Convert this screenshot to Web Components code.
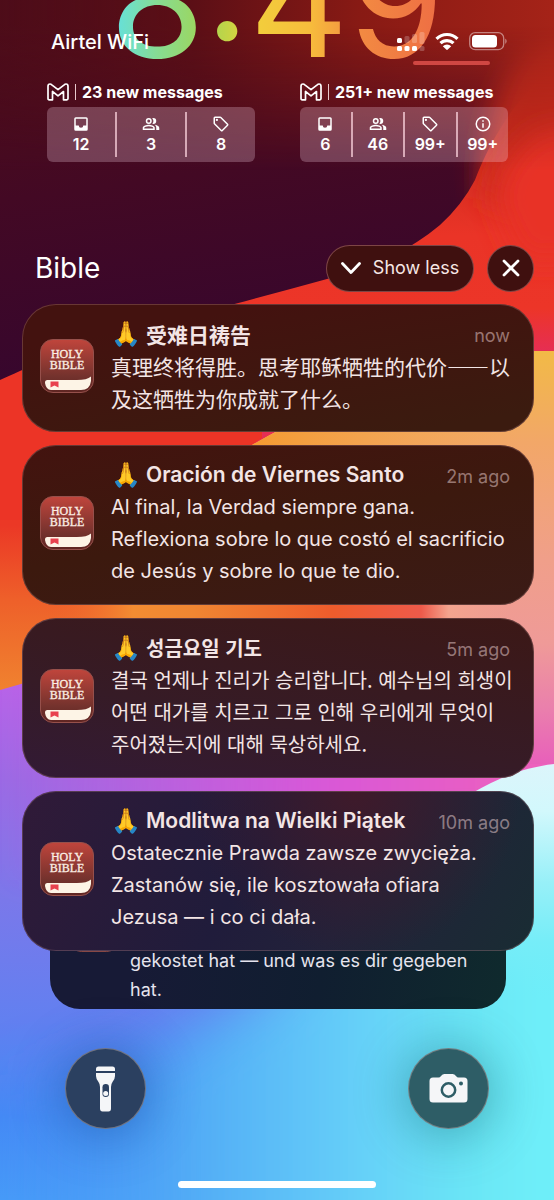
<!DOCTYPE html>
<html lang="en">
<head>
<meta charset="utf-8">
<meta name="viewport" content="width=device-width, initial-scale=1">
<title>Lock screen</title>
<style>
  html, body {
    margin: 0;
    min-height: 100vh;
  }

  body {
    font-family: Inter, "Noto Sans", "Noto Sans CJK SC", "Noto Color Emoji", sans-serif;
    color: #fff;
    background: #4a0c1a;
  }
</style>
</head>
<body>
<lock-screen>
  <status-bar slot="status" carrier="Airtel WiFi"></status-bar>
  <lock-clock slot="clock">8:49</lock-clock>

  <mail-widget slot="widgets" heading="23 new messages">
    <mail-stat icon="inbox">12</mail-stat>
    <mail-stat icon="people">3</mail-stat>
    <mail-stat icon="tag">8</mail-stat>
  </mail-widget>
  <mail-widget slot="widgets" heading="251+ new messages">
    <mail-stat icon="inbox">6</mail-stat>
    <mail-stat icon="people">46</mail-stat>
    <mail-stat icon="tag">99+</mail-stat>
    <mail-stat icon="info">99+</mail-stat>
  </mail-widget>

  <notification-group heading="Bible">
    <notification-card lang="zh-Hans" time="now" style="--fill: linear-gradient(170deg, #43120f 20%, #3b1b0f 90%)">
      <span slot="title">受难日祷告</span>
      真理终将得胜。思考耶稣牺牲的代价——以及这牺牲为你成就了什么。
    </notification-card>
    <notification-card lang="es" time="2m ago" style="--fill: linear-gradient(170deg, #43130f, #3c190e 50%, #3b1b16)">
      <span slot="title">Oración de Viernes Santo</span>
      Al final, la Verdad siempre gana. Reflexiona sobre lo que costó el sacrificio de Jesús y sobre lo que te dio.
    </notification-card>
    <notification-card lang="ko" time="5m ago" style="--fill: linear-gradient(190deg, #3c1816, #361b26 60%, #321a35)">
      <span slot="title">성금요일 기도</span>
      결국 언제나 진리가 승리합니다. 예수님의 희생이 어떤 대가를 치르고 그로 인해 우리에게 무엇이 주어졌는지에 대해 묵상하세요.
    </notification-card>
    <notification-card lang="pl" time="10m ago" style="--fill: radial-gradient(circle at 65% 0, #3f1a2a, transparent 45%), linear-gradient(120deg, #301a38, #201c3b 45%, #22223a 65%, #192c33)">
      <span slot="title">Modlitwa na Wielki Piątek</span>
      Ostatecznie Prawda zawsze zwycięża. Zastanów się, ile kosztowała ofiara Jezusa — i co ci dała.
    </notification-card>
    <stacked-card slot="stack" lang="de">gekostet hat — und was es dir gegeben hat.</stacked-card>
  </notification-group>

  <round-control slot="controls" icon="torch" label="Flashlight"></round-control>
  <round-control slot="controls" icon="camera" label="Camera"></round-control>
</lock-screen>

<script>
const wallpaper = `
  <svg viewBox="0 0 554 1200" preserveAspectRatio="none" aria-hidden="true">
    <defs>
      <linearGradient id="base" x1="0" y1="0" x2="0" y2="1">
        <stop offset=".57" stop-color="#b763e8"/>
        <stop offset=".65" stop-color="#9a6ae4"/>
        <stop offset=".75" stop-color="#7a78ea"/>
        <stop offset=".85" stop-color="#6280f0"/>
        <stop offset=".93" stop-color="#4488f5"/>
        <stop offset="1" stop-color="#469af8"/>
      </linearGradient>
      <linearGradient id="pink" x1="0" y1="0" x2="1" y2="0">
        <stop offset="0" stop-color="#d858d8" stop-opacity="0"/>
        <stop offset=".5" stop-color="#d858d8"/>
        <stop offset=".85" stop-color="#ee60bc"/>
        <stop offset="1" stop-color="#ea64c4"/>
      </linearGradient>
      <linearGradient id="sea" x1="0" y1="0" x2="554" y2="0" gradientUnits="userSpaceOnUse">
        <stop offset="0" stop-color="#4894f6" stop-opacity="0"/>
        <stop offset=".35" stop-color="#52acf6"/>
        <stop offset=".65" stop-color="#66d0f9"/>
        <stop offset=".85" stop-color="#6ae6f5"/>
        <stop offset="1" stop-color="#70f0fa"/>
      </linearGradient>
      <linearGradient id="ice" x1="0" y1="764" x2="0" y2="1000" gradientUnits="userSpaceOnUse">
        <stop offset="0" stop-color="#dcf5fb"/>
        <stop offset=".2" stop-color="#d2f8fc"/>
        <stop offset=".5" stop-color="#98f0f8"/>
        <stop offset=".75" stop-color="#76edf8"/>
        <stop offset="1" stop-color="#70ecf8" stop-opacity="0"/>
      </linearGradient>
      <linearGradient id="ember" x1="0" y1="390" x2="0" y2="690" gradientUnits="userSpaceOnUse">
        <stop offset="0" stop-color="#ec3426"/>
        <stop offset=".45" stop-color="#eb3826"/>
        <stop offset=".7" stop-color="#ee602a"/>
        <stop offset="1" stop-color="#f0822f"/>
      </linearGradient>
      <linearGradient id="glow" x1="0" y1="0" x2="1" y2="0">
        <stop offset=".08" stop-color="#ee5e2c" stop-opacity="0"/>
        <stop offset=".24" stop-color="#f38c32"/>
        <stop offset=".35" stop-color="#f08632"/>
        <stop offset=".6" stop-color="#ee5c2c"/>
        <stop offset=".76" stop-color="#ee5a4a"/>
        <stop offset=".81" stop-color="#f3a48e"/>
        <stop offset=".92" stop-color="#f1a08e" stop-opacity="0"/>
      </linearGradient>
      <linearGradient id="sand" x1="0" y1="350" x2="0" y2="770" gradientUnits="userSpaceOnUse">
        <stop offset="0" stop-color="#f2ba46"/>
        <stop offset=".22" stop-color="#f2a768"/>
        <stop offset=".5" stop-color="#f09f8a"/>
        <stop offset=".7" stop-color="#ef9a98"/>
        <stop offset=".85" stop-color="#ea80ac"/>
        <stop offset="1" stop-color="#e85cbc"/>
      </linearGradient>
      <linearGradient id="amber" x1="250" y1="0" x2="520" y2="0" gradientUnits="userSpaceOnUse">
        <stop offset="0" stop-color="#f59a30"/>
        <stop offset="1" stop-color="#f2a850" stop-opacity="0"/>
      </linearGradient>
      <linearGradient id="flame" x1="0" y1="60" x2="0" y2="352" gradientUnits="userSpaceOnUse">
        <stop offset="0" stop-color="#b0261a"/>
        <stop offset=".3" stop-color="#d02c1e"/>
        <stop offset=".6" stop-color="#ea3427"/>
        <stop offset=".85" stop-color="#ec3528"/>
        <stop offset="1" stop-color="#e62e54"/>
      </linearGradient>
      <linearGradient id="night" x1=".3" y1="0" x2=".5" y2="1">
        <stop offset="0" stop-color="#500d18"/>
        <stop offset=".45" stop-color="#430924"/>
        <stop offset="1" stop-color="#35062f"/>
      </linearGradient>
      <linearGradient id="dusk" x1="0" y1="0" x2="1" y2="0">
        <stop offset="0" stop-color="#4c0c1a" stop-opacity=".6"/>
        <stop offset=".35" stop-color="#5c0f16"/>
        <stop offset=".65" stop-color="#881a14"/>
        <stop offset="1" stop-color="#a52318"/>
      </linearGradient>
      <linearGradient id="fade" x1="0" y1="0" x2="0" y2="1">
        <stop offset=".15" stop-color="#fff"/>
        <stop offset="1" stop-color="#000"/>
      </linearGradient>
      <mask id="top"><rect width="554" height="170" fill="url(#fade)"/></mask>
      <filter id="soft" x="-50%" y="-50%" width="200%" height="200%"><feGaussianBlur stdDeviation="14"/></filter>
      <filter id="softer" x="-50%" y="-50%" width="200%" height="200%"><feGaussianBlur stdDeviation="30"/></filter>
    </defs>
    <rect width="554" height="1200" fill="url(#base)"/>
    <rect y="640" width="640" height="240" fill="url(#pink)" filter="url(#soft)"/>
    <path d="M-60 1090L140 1060L260 990L400 860H700V1400H-60Z" fill="url(#sea)" filter="url(#softer)"/>
    <path d="M0 300H554V670H70L0 690Z" fill="url(#ember)"/>
    <path d="M554 351C430 348 330 400 250 446H430V764H554Z" fill="url(#sand)"/>
    <path d="M0 180H554V351C430 348 330 400 250 446H0Z" fill="url(#flame)"/>
    <path d="M0 340H262V438L250 446V520H0Z" fill="#ec3426"/>
    <path d="M520 370C430 370 330 400 250 446H520Z" fill="url(#amber)"/>
    <rect y="590" width="554" height="50" fill="url(#glow)"/>
    <path d="M554 764C520 768 495 780 474 792C430 830 400 880 390 1000H554Z" fill="url(#ice)"/>
    <rect width="554" height="260" fill="url(#flame)"/>
    <path d="M0 380C40 362 60 354 90 345C150 326 240 303 327 279C380 264 410 250 440 225Q462 205 475 180C490 140 520 90 554 70V0H0Z" fill="url(#night)"/>
    <path d="M640 20L540 30Q480 80 482 196L520 210H640Z" fill="#c92a1d" filter="url(#soft)"/>
    <path d="M640 120L540 130Q500 160 494 200L520 260H640Z" fill="#e83226" filter="url(#soft)"/>
    <rect width="554" height="170" fill="url(#dusk)" mask="url(#top)"/>
  </svg>`;

const icons = {
  inbox: `<path d="M19 3H5a2 2 0 0 0-2 2v14a2 2 0 0 0 2 2h14a2 2 0 0 0 2-2V5a2 2 0 0 0-2-2zm0 11h-4a3 3 0 0 1-6 0H5V5h14z"/>`,
  people: `<path d="M16.7 13.1C18.1 14 19 15.300 19 17v3h4v-3c0-2.200-3.600-3.500-6.300-3.900zM15 12a4 4 0 0 0 0-8c-.5 0-.9.1-1.300.2a6 6 0 0 1 0 7.600c.4.1.8.2 1.300.2zM9 12a4 4 0 1 0 0-8 4 4 0 0 0 0 8zm0-6a2 2 0 1 1 0 4 2 2 0 0 1 0-4zm0 7c-2.700 0-8 1.300-8 4v3h16v-3c0-2.700-5.300-4-8-4zm6 5H3v-1c0-.7 3.200-2 6-2s6 1.300 6 2z"/>`,
  tag: `<path d="M21.400 11.600l-9-9A2 2 0 0 0 11 2H4a2 2 0 0 0-2 2v7c0 .6.200 1.100.6 1.400l9 9a2 2 0 0 0 2.800 0l7-7a2 2 0 0 0 0-2.800zM13 20l-9-9V4h7l9 9z"/><circle cx="6.500" cy="6.500" r="1.500"/>`,
  info: `<path d="M11 7h2v2h-2zm0 4h2v6h-2zm1-9a10 10 0 1 0 0 20 10 10 0 0 0 0-20zm0 18a8 8 0 1 1 0-16 8 8 0 0 1 0 16z"/>`,
};

class LockScreen extends HTMLElement {
  constructor() {
    super();
    this.attachShadow({ mode: 'open' }).innerHTML = `
      <style>
        :host {
          display: flex;
          flex-direction: column;
          position: relative;
          min-height: 100vh;
          overflow: hidden;
          isolation: isolate;
        }
        .wallpaper {
          position: absolute;
          inset: 0;
          z-index: -1;
        }
        svg {
          display: block;
          width: 100%;
          height: 100%;
        }
        .status {
          position: absolute;
          inset: 0 0 auto;
          z-index: 1;
        }
        .widgets {
          display: grid;
          grid-template-columns: 1fr 1fr;
          gap: 45px;
          padding: 6px 46px 83px 47px;
        }
        .controls {
          display: flex;
          justify-content: space-between;
          padding: 39px 65px 52px;
        }
        .home {
          width: 198px;
          height: 7px;
          margin: auto auto 12px;
          border-radius: 4px;
          background: #fff;
        }
      </style>
      <div class="wallpaper">${wallpaper}</div>
      <div class="status"><slot name="status"></slot></div>
      <slot name="clock"></slot>
      <div class="widgets"><slot name="widgets"></slot></div>
      <slot></slot>
      <div class="controls"><slot name="controls"></slot></div>
      <div class="home"></div>
    `;
  }
}

class StatusBar extends HTMLElement {
  constructor() {
    super();
    this.attachShadow({ mode: 'open' }).innerHTML = `
      <style>
        :host {
          display: flex;
          justify-content: space-between;
          padding: 30px 46px 0 51px;
          font-size: 20px;
          font-weight: 500;
          line-height: 24px;
        }
        .side {
          display: grid;
          justify-items: start;
        }
        svg {
          display: block;
        }
        .privacy {
          width: 77px;
          height: 4px;
          margin: 7px 0 0 16px;
          border-radius: 2px;
          background: #d04743;
        }
      </style>
      <span>${this.getAttribute('carrier')}</span>
      <div class="side">
        <svg width="111" height="24" viewBox="397 30 111 24" fill="#fff" role="img" aria-label="Signal, Wi-Fi, battery">
          <rect x="397" y="38" width="5" height="5" rx="1.500"/>
          <rect x="397" y="46" width="5" height="5" rx="1.500"/>
          <rect x="404.500" y="46" width="5" height="5" rx="1.500"/>
          <rect x="412" y="46" width="5" height="5" rx="1.500"/>
          <g opacity=".22">
            <rect x="404.500" y="36" width="5" height="7" rx="1.500"/>
            <rect x="412" y="34" width="5" height="9" rx="1.500"/>
            <rect x="419.500" y="32" width="5" height="12" rx="1.500"/>
            <rect x="419.500" y="46" width="5" height="5" rx="1.500"/>
          </g>
          <g fill="none" stroke="#fff" stroke-width="3.200">
            <path d="M436.500 38.800a15 15 0 0 1 21 0"/>
            <path d="M440.500 43.200a9.300 9.300 0 0 1 13 0"/>
          </g>
          <path d="M442.800 46.200a6 6 0 0 1 8.400 0l-3.400 3.400a1.200 1.200 0 0 1-1.600 0z"/>
          <rect x="469.700" y="32.700" width="34" height="17" rx="5.500" fill="none" stroke="#fff" stroke-opacity=".45" stroke-width="1.300"/>
          <rect x="472" y="35" width="25" height="12.500" rx="3.500"/>
          <path d="M505.300 38.500q2.700 2.700 0 5.400z" opacity=".5"/>
        </svg>
        <div class="privacy"></div>
      </div>
    `;
  }
}

class LockClock extends HTMLElement {
  constructor() {
    super();
    this.attachShadow({ mode: 'open' }).innerHTML = `
      <style>
        /* scrolled up, so only the feet of the digits are on screen */
        :host {
          display: block;
          margin-top: -76px;
          text-align: center;
          font-size: 154px;
          line-height: 154px;
        }
        span {
          display: inline-block;
          vertical-align: top;
          color: transparent;
          background: linear-gradient(90deg, #66e0da 2%, #86dc94 14%, #9fd558 28%, #c8d444 36%, #f2cf3c 43%, #f7bc3c 60%, #f28a42 75%, #ee6c44);
          -webkit-background-clip: text;
          background-clip: text;
        }
      </style>
      <span><slot></slot></span>
    `;
  }
}

class MailWidget extends HTMLElement {
  constructor() {
    super();
    this.attachShadow({ mode: 'open' }).innerHTML = `
      <style>
        :host {
          display: grid;
          gap: 7px;
          min-width: 0;
        }
        header {
          display: flex;
          align-items: center;
          gap: 6px;
          height: 16px;
          font-size: 16px;
          font-weight: 700;
          line-height: 16px;
          white-space: nowrap;
        }
        i {
          width: 1px;
          height: 16px;
          background: #e8c8cc;
        }
        .stats {
          display: flex;
          height: 45px;
          padding: 5px 0;
          border-radius: 6px;
          background: rgba(255, 225, 245, .25);
        }
      </style>
      <header>
        <svg width="22" height="18" viewBox="0 0 22 18" fill="none" stroke="#fff" stroke-width="1.700" stroke-linejoin="round" aria-hidden="true">
          <path d="M1 3.300Q1 1 3 1Q4 1 4.800 1.800L11 6.700L17.200 1.800Q18 1 19 1Q21 1 21 3.300V15.500Q21 16.800 19.800 16.800H16.500V8.500L11 12.800L5.500 8.500V16.800H2.200Q1 16.800 1 15.500Z"/>
        </svg>
        <i></i>
        <span>${this.getAttribute('heading')}</span>
      </header>
      <div class="stats"><slot></slot></div>
    `;
  }
}

class MailStat extends HTMLElement {
  constructor() {
    super();
    this.attachShadow({ mode: 'open' }).innerHTML = `
      <style>
        :host {
          display: flex;
          flex: 1 1 0;
          flex-direction: column;
          align-items: center;
          gap: 1px;
          padding-top: 3px;
          border-left: 2px solid rgba(255, 215, 225, .7);
          font-size: 16px;
          font-weight: 600;
          line-height: 20px;
        }
        :host(:first-child) {
          border-left: 0;
        }
      </style>
      <svg width="18" height="18" viewBox="0 0 24 24" fill="#fff" aria-hidden="true">${icons[this.getAttribute('icon')]}</svg>
      <slot></slot>
    `;
  }
}

class NotificationGroup extends HTMLElement {
  constructor() {
    super();
    this.attachShadow({ mode: 'open' }).innerHTML = `
      <style>
        :host {
          display: flex;
          flex-direction: column;
          gap: 13px;
          padding: 0 20px 0 22px;
        }
        header {
          display: flex;
          align-items: center;
          gap: 13px;
          height: 46px;
        }
        h1 {
          flex: 1;
          margin: 0 0 0 13px;
          font-size: 28px;
          font-weight: 400;
          line-height: 36px;
        }
        button {
          display: flex;
          align-items: center;
          justify-content: center;
          gap: 12px;
          box-sizing: border-box;
          height: 47px;
          padding: 0;
          border: 1px solid rgba(220, 150, 150, .4);
          border-radius: 24px;
          background: #3f100f;
          color: #f6e6e4;
          font: 400 18px/24px Inter, sans-serif;
        }
        .less {
          width: 148px;
        }
        .close {
          width: 47px;
        }
      </style>
      <header>
        <h1>${this.getAttribute('heading')}</h1>
        <button class="less">
          <svg width="20" height="12" viewBox="0 0 20 12" fill="none" stroke="#fff" stroke-width="2.800" stroke-linecap="round" stroke-linejoin="round" aria-hidden="true"><path d="M1.500 1.500L10 10.500L18.500 1.500"/></svg>
          Show less
        </button>
        <button class="close" aria-label="Close">
          <svg width="18" height="18" viewBox="0 0 18 18" fill="none" stroke="#fff" stroke-width="2.800" stroke-linecap="round" aria-hidden="true"><path d="M2 2L16 16M16 2L2 16"/></svg>
        </button>
      </header>
      <slot></slot>
      <slot name="stack"></slot>
    `;
  }
}

class BibleIcon extends HTMLElement {
  constructor() {
    super();
    this.attachShadow({ mode: 'open' }).innerHTML = `
      <style>
        :host {
          display: block;
          flex: none;
          width: 54px;
        }
        svg {
          display: block;
          width: 100%;
        }
        text {
          font: 400 12px "Liberation Serif", serif;
          fill: #fbeee4;
          stroke: #fbeee4;
          stroke-width: .3px;
        }
      </style>
      <svg viewBox="0 0 54 54" role="img" aria-label="Bible">
        <defs>
          <linearGradient id="cover" x1="0" y1="0" x2="0" y2="1">
            <stop offset="0" stop-color="#c0453c"/>
            <stop offset=".7" stop-color="#73322d"/>
            <stop offset="1" stop-color="#5f2522"/>
          </linearGradient>
        </defs>
        <rect x=".5" y=".5" width="53" height="53" rx="12.500" fill="url(#cover)" stroke="#96504b"/>
        <text x="27" y="19" text-anchor="middle">HOLY</text>
        <text x="27" y="30" text-anchor="middle">BIBLE</text>
        <path d="M7.500 41H37Q47 41 51 37.500V42Q50 51 41 51H11Q6 50.500 5 44Q4.800 41 7.500 41Z" fill="#fdf4e6"/>
        <path d="M10.500 42.500H18.500V48.500L14.500 46.500L10.500 48.500Z" fill="#e8414e"/>
      </svg>
    `;
  }
}

class NotificationCard extends HTMLElement {
  constructor() {
    super();
    this.attachShadow({ mode: 'open' }).innerHTML = `
      <style>
        :host {
          display: flex;
          position: relative;
          z-index: 1;
          align-items: center;
          gap: 17px;
          padding: 14px 24px 18px 18px;
          border-radius: 34px;
          background: var(--fill);
          box-shadow: inset 0 0 0 1px rgba(200, 150, 150, .28);
          color: #f3e5e5;
          font-size: 20px;
          line-height: 32px;
        }
        :host(:lang(zh)) {
          font-family: "Noto Sans CJK SC", sans-serif;
          font-size: 21px;
        }
        :host(:lang(ko)) {
          padding-right: 20px;
          font-family: "Noto Sans CJK KR", sans-serif;
          word-break: keep-all;
        }
        .text {
          flex: 1;
          min-width: 0;
        }
        header {
          display: flex;
          align-items: center;
          gap: 7px;
          height: 32px;
          font-size: 21px;
          font-weight: 600;
        }
        :host(:lang(ko)) header {
          padding-right: 4px;
          font-size: 20px;
        }
        .pray {
          width: 28px;
          font: 24px/28px "Noto Color Emoji", sans-serif;
        }
        time {
          margin-left: auto;
          padding-top: 4px;
          color: rgba(255, 225, 225, .48);
          font: 400 18px/28px Inter, sans-serif;
        }
      </style>
      <bible-icon></bible-icon>
      <div class="text">
        <header>
          <span class="pray">🙏</span>
          <slot name="title"></slot>
          <time>${this.getAttribute('time')}</time>
        </header>
        <slot></slot>
      </div>
    `;
  }
}

class StackedCard extends HTMLElement {
  constructor() {
    super();
    this.attachShadow({ mode: 'open' }).innerHTML = `
      <style>
        :host {
          display: flex;
          align-items: start;
          gap: 12px;
          margin: -74px 28px 0;
          padding: 14px 20px 5px;
          border-radius: 30px;
          background: linear-gradient(100deg, #171a36 20%, #101e30 60%, #0f2a2d);
          color: #e6e4ee;
          font-size: 18px;
          line-height: 29px;
        }
        bible-icon {
          width: 48px;
        }
        p {
          flex: 1;
          margin: 42px 0 0;
        }
      </style>
      <bible-icon></bible-icon>
      <p><slot></slot></p>
    `;
  }
}

class RoundControl extends HTMLElement {
  constructor() {
    super();
    const torch = this.getAttribute('icon') === 'torch';
    const glyph = torch
      ? `<path d="M31 21Q31 18.500 33.500 18.500H47.500Q50 18.500 50 21V23H31ZM31 25H50V28Q50 31 47.500 34Q46 36 46 39V60.500Q46 63.500 43.500 63.500H37.500Q35 63.500 35 60.500V39Q35 36 33.500 34Q31 31 31 28Z"/>
         <rect x="37.500" y="36" width="6.500" height="13" rx="3.200" fill="#2b4060"/><circle cx="40.700" cy="45.500" r="2.500"/>`
      : `<path d="M25 29.500H30.500Q32 29.500 33 28Q34.500 26 36.500 26H44.500Q46.500 26 48 28Q49 29.500 50.500 29.500H56Q59.500 29.500 59.500 33V51Q59.500 54.500 56 54.500H25Q21.500 54.500 21.500 51V33Q21.500 29.500 25 29.500Z"/>
         <circle cx="40.500" cy="42" r="6.700" fill="none" stroke="#2e5d66" stroke-width="2.500"/><circle cx="53" cy="35.500" r="2" fill="#2e5d66"/>`;
    this.attachShadow({ mode: 'open' }).innerHTML = `
      <style>
        :host {
          display: block;
        }
        button {
          display: block;
          box-sizing: border-box;
          width: 81px;
          height: 81px;
          padding: 0;
          border: 1px solid rgba(160, 150, 150, .6);
          border-radius: 50%;
          background: ${torch ? '#2b4060' : '#2e5d66'};
          box-shadow: 0 4px 50px 4px ${torch ? 'rgba(10, 60, 140, .42)' : 'rgba(10, 90, 100, .42)'};
        }
        svg {
          display: block;
          margin: -1px;
        }
      </style>
      <button aria-label="${this.getAttribute('label')}">
        <svg width="81" height="81" viewBox="0 0 81 81" fill="#f5f6f8" aria-hidden="true">${glyph}</svg>
      </button>
    `;
  }
}

customElements.define('lock-screen', LockScreen);
customElements.define('status-bar', StatusBar);
customElements.define('lock-clock', LockClock);
customElements.define('mail-widget', MailWidget);
customElements.define('mail-stat', MailStat);
customElements.define('bible-icon', BibleIcon);
customElements.define('notification-group', NotificationGroup);
customElements.define('notification-card', NotificationCard);
customElements.define('stacked-card', StackedCard);
customElements.define('round-control', RoundControl);
</script>
</body>
</html>
